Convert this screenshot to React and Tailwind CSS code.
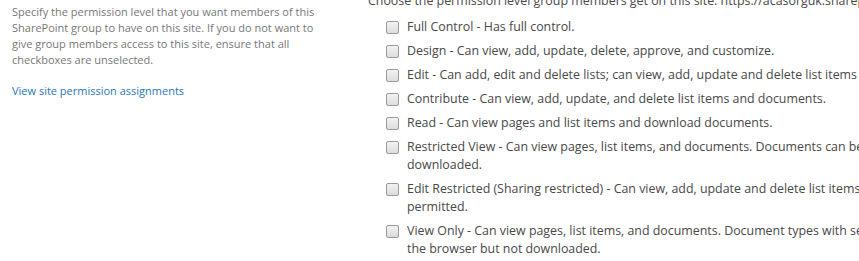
import React from "react";

const items = [
  ["Full Control - Has full control."],
  ["Design - Can view, add, update, delete, approve, and customize."],
  ["Edit - Can add, edit and delete lists; can view, add, update and delete list items and documents."],
  ["Contribute - Can view, add, update, and delete list items and documents."],
  ["Read - Can view pages and list items and download documents."],
  ["Restricted View - Can view pages, list items, and documents. Documents can be", "downloaded."],
  ["Edit Restricted (Sharing restricted) - Can view, add, update and delete list items", "permitted."],
  ["View Only - Can view pages, list items, and documents. Document types with server-side file handlers can be viewed in", "the browser but not downloaded."],
];

function Box() {
  return (
    <span className="mt-[3px] block h-[13px] w-[13px] shrink-0 rounded-[2px] border border-[#9a9a9a] bg-gradient-to-b from-[#f2f2f2] to-[#dcdcdc]" />
  );
}

export default function App() {
  return (
    <div className="h-[261px] w-[859px] overflow-hidden bg-white font-['Open_Sans',sans-serif]">
      <div className="flex">
        <div className="w-[368px] shrink-0 pl-3 pr-10 pt-[4px]">
          <p className="text-[11px] leading-[16px] text-[#777]">
            Specify the permission level that you want members of this SharePoint group to have on this site. If you do not want to give group members access to this site, ensure that all checkboxes are unselected.
          </p>
          <a className="mt-[15px] block text-[11px] leading-[16px] text-[#2a76b4]">View site permission assignments</a>
        </div>
        <div className="min-w-0 flex-1 -mt-[8px] whitespace-nowrap text-[12.4px] leading-[18px] text-[#484848]">
          <div>Choose the permission level group members get on this site: https://acasorguk.sharepoint.com</div>
          <div className="ml-[18px] mt-[2px] flex flex-col">
            {items.map((lines, i) => (
              <div key={i} className="mt-[6px] flex gap-[8px]">
                <Box />
                <div>
                  {lines.map((l, j) => (
                    <div key={j}>{l}</div>
                  ))}
                </div>
              </div>
            ))}
          </div>
        </div>
      </div>
    </div>
  );
}
